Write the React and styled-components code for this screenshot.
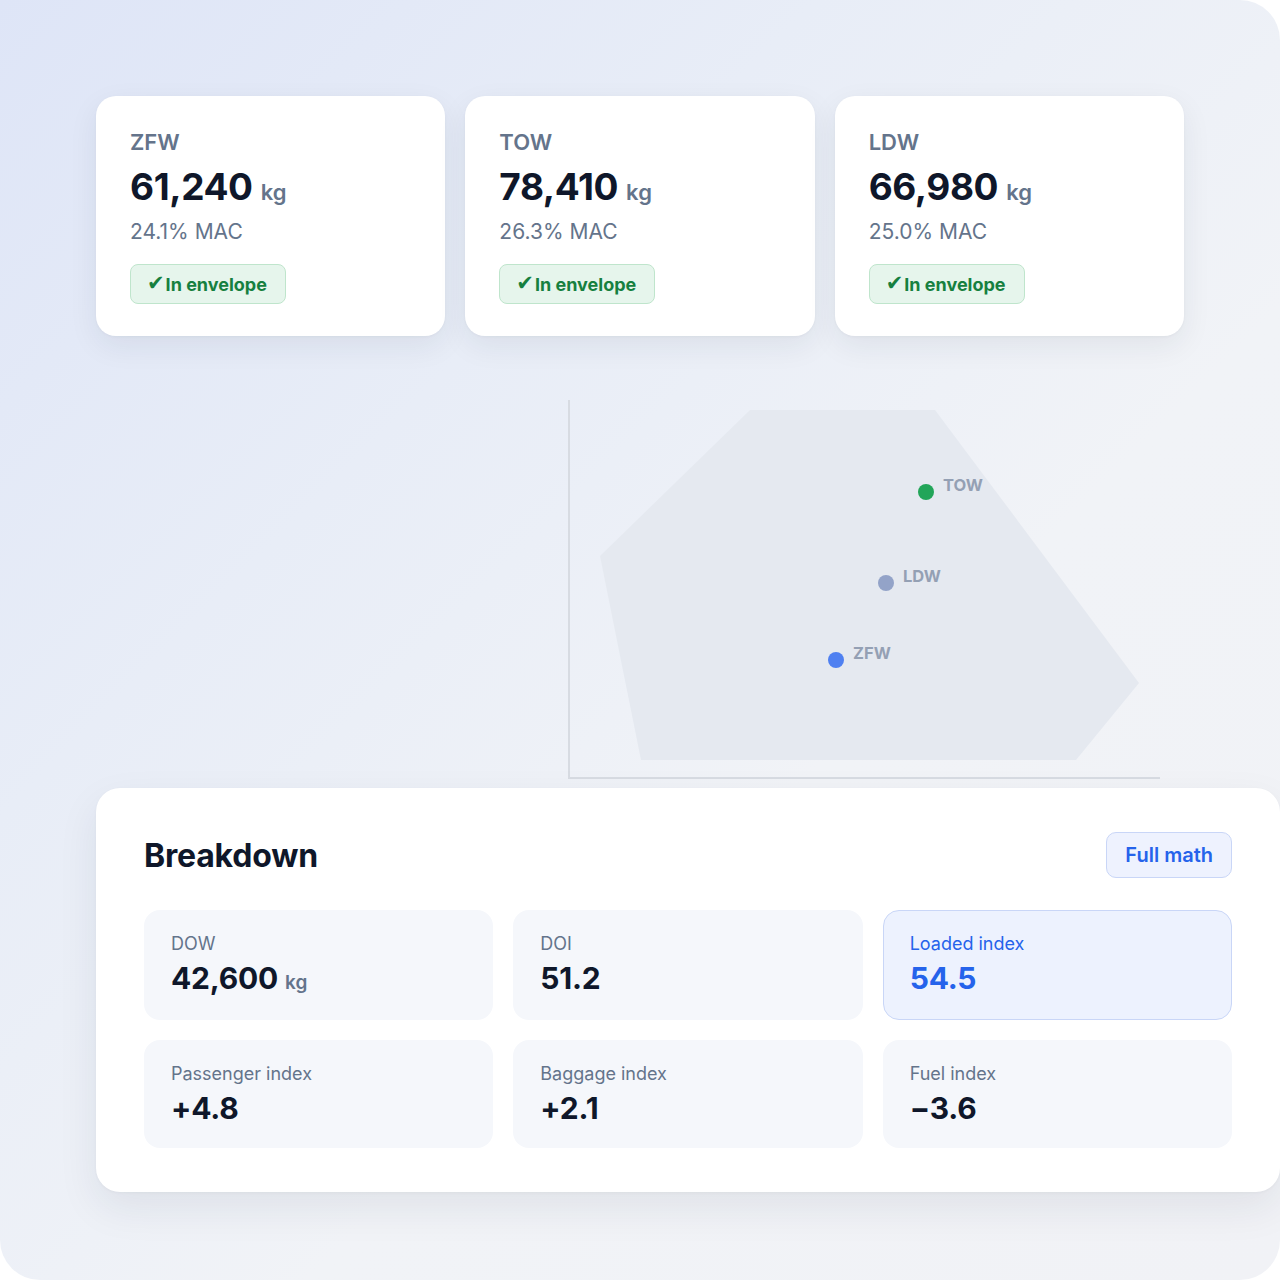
import React from "react";
import styled, { createGlobalStyle } from "styled-components";

const Global = createGlobalStyle`
  html, body { margin: 0; padding: 0; background: #ffffff; }
  body { font-family: Inter, "Noto Sans", "Liberation Sans", sans-serif; -webkit-font-smoothing: antialiased; }
  * { box-sizing: border-box; }
`;

const Frame = styled.div`
  width: 1280px;
  height: 1280px;
  border-radius: 0 40px 40px 40px;
  background: linear-gradient(135deg, #dee5f7 0%, #e8edf7 32%, #f1f3f7 62%, #f1f2f6 100%);
  padding: 96px 0 0 96px;
  display: flex;
  flex-direction: column;
`;

const SummaryRow = styled.div`
  display: grid;
  grid-template-columns: repeat(3, 1fr);
  gap: 20px;
  width: 1088px;
`;

const SummaryCard = styled.div`
  background: #ffffff;
  border-radius: 20px;
  height: 240px;
  padding: 32px 34px;
  box-shadow: 0 10px 30px rgba(30, 41, 59, 0.07), 0 1px 3px rgba(30, 41, 59, 0.04);
  display: flex;
  flex-direction: column;
  align-items: flex-start;
`;

const CardLabel = styled.div`
  font-size: 22px;
  font-weight: 600;
  color: #64748b;
  line-height: 28px;
`;

const BigValue = styled.div`
  margin-top: 8px;
  font-size: 37px;
  font-weight: 700;
  color: #0f172a;
  line-height: 46px;
  letter-spacing: -0.4px;
`;

const Unit = styled.span`
  font-size: 22px;
  font-weight: 600;
  color: #64748b;
  margin-left: 8px;
  letter-spacing: 0;
`;

const Mac = styled.div`
  margin-top: 4px;
  font-size: 21px;
  color: #64748b;
  line-height: 26px;
`;

const Badge = styled.div`
  margin-top: 19px;
  height: 40px;
  padding: 0 18px 0 16px;
  display: inline-flex;
  align-items: center;
  gap: 1px;
  background: #e6f5ec;
  border: 1px solid #bfe5cc;
  border-radius: 8px;
  color: #16803f;
  font-size: 18px;
  font-weight: 700;
`;

const Check = styled.span`
  font-family: "DejaVu Sans", sans-serif;
  font-size: 21px;
  font-weight: 400;
  line-height: 1;
  margin-top: -1px;
`;

const ChartArea = styled.div`
  height: 452px;
  padding-left: 472px;
  display: flex;
  align-items: flex-start;
`;

const Breakdown = styled.div`
  width: 1184px;
  height: 404px;
  background: #ffffff;
  border-radius: 24px;
  padding: 44px 48px 0 48px;
  box-shadow: 0 16px 40px rgba(30, 41, 59, 0.08), 0 1px 3px rgba(30, 41, 59, 0.04);
`;

const Header = styled.div`
  display: flex;
  align-items: center;
  justify-content: space-between;
  height: 46px;
`;

const Title = styled.h2`
  margin: 0;
  font-size: 32px;
  font-weight: 700;
  color: #0f172a;
  letter-spacing: -0.2px;
`;

const MathButton = styled.button`
  height: 46px;
  padding: 0 18px;
  background: #eef2fe;
  border: 1px solid #c9d6f7;
  border-radius: 10px;
  color: #2563eb;
  font-family: inherit;
  font-size: 20px;
  font-weight: 600;
`;

const Grid = styled.div`
  margin-top: 32px;
  display: grid;
  grid-template-columns: repeat(3, 1fr);
  gap: 20px;
`;

const Cell = styled.div`
  height: ${(p) => (p.$row === 0 ? 110 : 108)}px;
  border-radius: 16px;
  padding: 21px 26px;
  background: ${(p) => (p.$active ? "#edf2fe" : "#f5f7fb")};
  border: 1px solid ${(p) => (p.$active ? "#c9d6f7" : "transparent")};
`;

const CellLabel = styled.div`
  font-size: 18px;
  color: ${(p) => (p.$active ? "#2563eb" : "#64748b")};
  line-height: 24px;
`;

const CellValue = styled.div`
  margin-top: 3px;
  font-size: 30px;
  font-weight: 700;
  line-height: 38px;
  letter-spacing: -0.2px;
  color: ${(p) => (p.$active ? "#2563eb" : "#0f172a")};
`;

const CellUnit = styled.span`
  font-size: 19px;
  font-weight: 600;
  color: #64748b;
  margin-left: 7px;
  letter-spacing: 0;
`;

const summary = [
  { label: "ZFW", value: "61,240", mac: "24.1% MAC" },
  { label: "TOW", value: "78,410", mac: "26.3% MAC" },
  { label: "LDW", value: "66,980", mac: "25.0% MAC" },
];

const cells = [
  { label: "DOW", value: "42,600", unit: "kg" },
  { label: "DOI", value: "51.2" },
  { label: "Loaded index", value: "54.5", active: true },
  { label: "Passenger index", value: "+4.8" },
  { label: "Baggage index", value: "+2.1" },
  { label: "Fuel index", value: "\u22123.6" },
];

const points = [
  { id: "TOW", x: 358, y: 156, color: "#22a559" },
  { id: "LDW", x: 318, y: 247, color: "#93a3c8" },
  { id: "ZFW", x: 268, y: 324, color: "#4f80f1" },
];

function Envelope() {
  return (
    <svg width="600" height="452" viewBox="0 0 600 452">
      <polygon
        points="32,220 182,74 367,74 571,347 508,424 73,424"
        fill="#e5e9f0"
      />
      <line x1="1" y1="64" x2="1" y2="442" stroke="#d7dbe2" strokeWidth="2" />
      <line x1="0" y1="442" x2="592" y2="442" stroke="#d7dbe2" strokeWidth="2" />
      {points.map((p) => (
        <g key={p.id}>
          <circle cx={p.x} cy={p.y} r="8" fill={p.color} />
          <text
            x={p.x + 17}
            y={p.y - 1}
            fill="#94a0b4"
            fontSize="16.5"
            fontWeight="700"
            fontFamily="Inter, 'Noto Sans', sans-serif"
          >
            {p.id}
          </text>
        </g>
      ))}
    </svg>
  );
}

export default function App() {
  return (
    <>
      <Global />
      <Frame>
        <SummaryRow>
          {summary.map((s) => (
            <SummaryCard key={s.label}>
              <CardLabel>{s.label}</CardLabel>
              <BigValue>
                {s.value}
                <Unit>kg</Unit>
              </BigValue>
              <Mac>{s.mac}</Mac>
              <Badge>
                <Check>✔</Check>
                <span>In envelope</span>
              </Badge>
            </SummaryCard>
          ))}
        </SummaryRow>
        <ChartArea>
          <Envelope />
        </ChartArea>
        <Breakdown>
          <Header>
            <Title>Breakdown</Title>
            <MathButton>Full math</MathButton>
          </Header>
          <Grid>
            {cells.map((c, i) => (
              <Cell key={c.label} $active={c.active} $row={i < 3 ? 0 : 1}>
                <CellLabel $active={c.active}>{c.label}</CellLabel>
                <CellValue $active={c.active}>
                  {c.value}
                  {c.unit && <CellUnit>{c.unit}</CellUnit>}
                </CellValue>
              </Cell>
            ))}
          </Grid>
        </Breakdown>
      </Frame>
    </>
  );
}
